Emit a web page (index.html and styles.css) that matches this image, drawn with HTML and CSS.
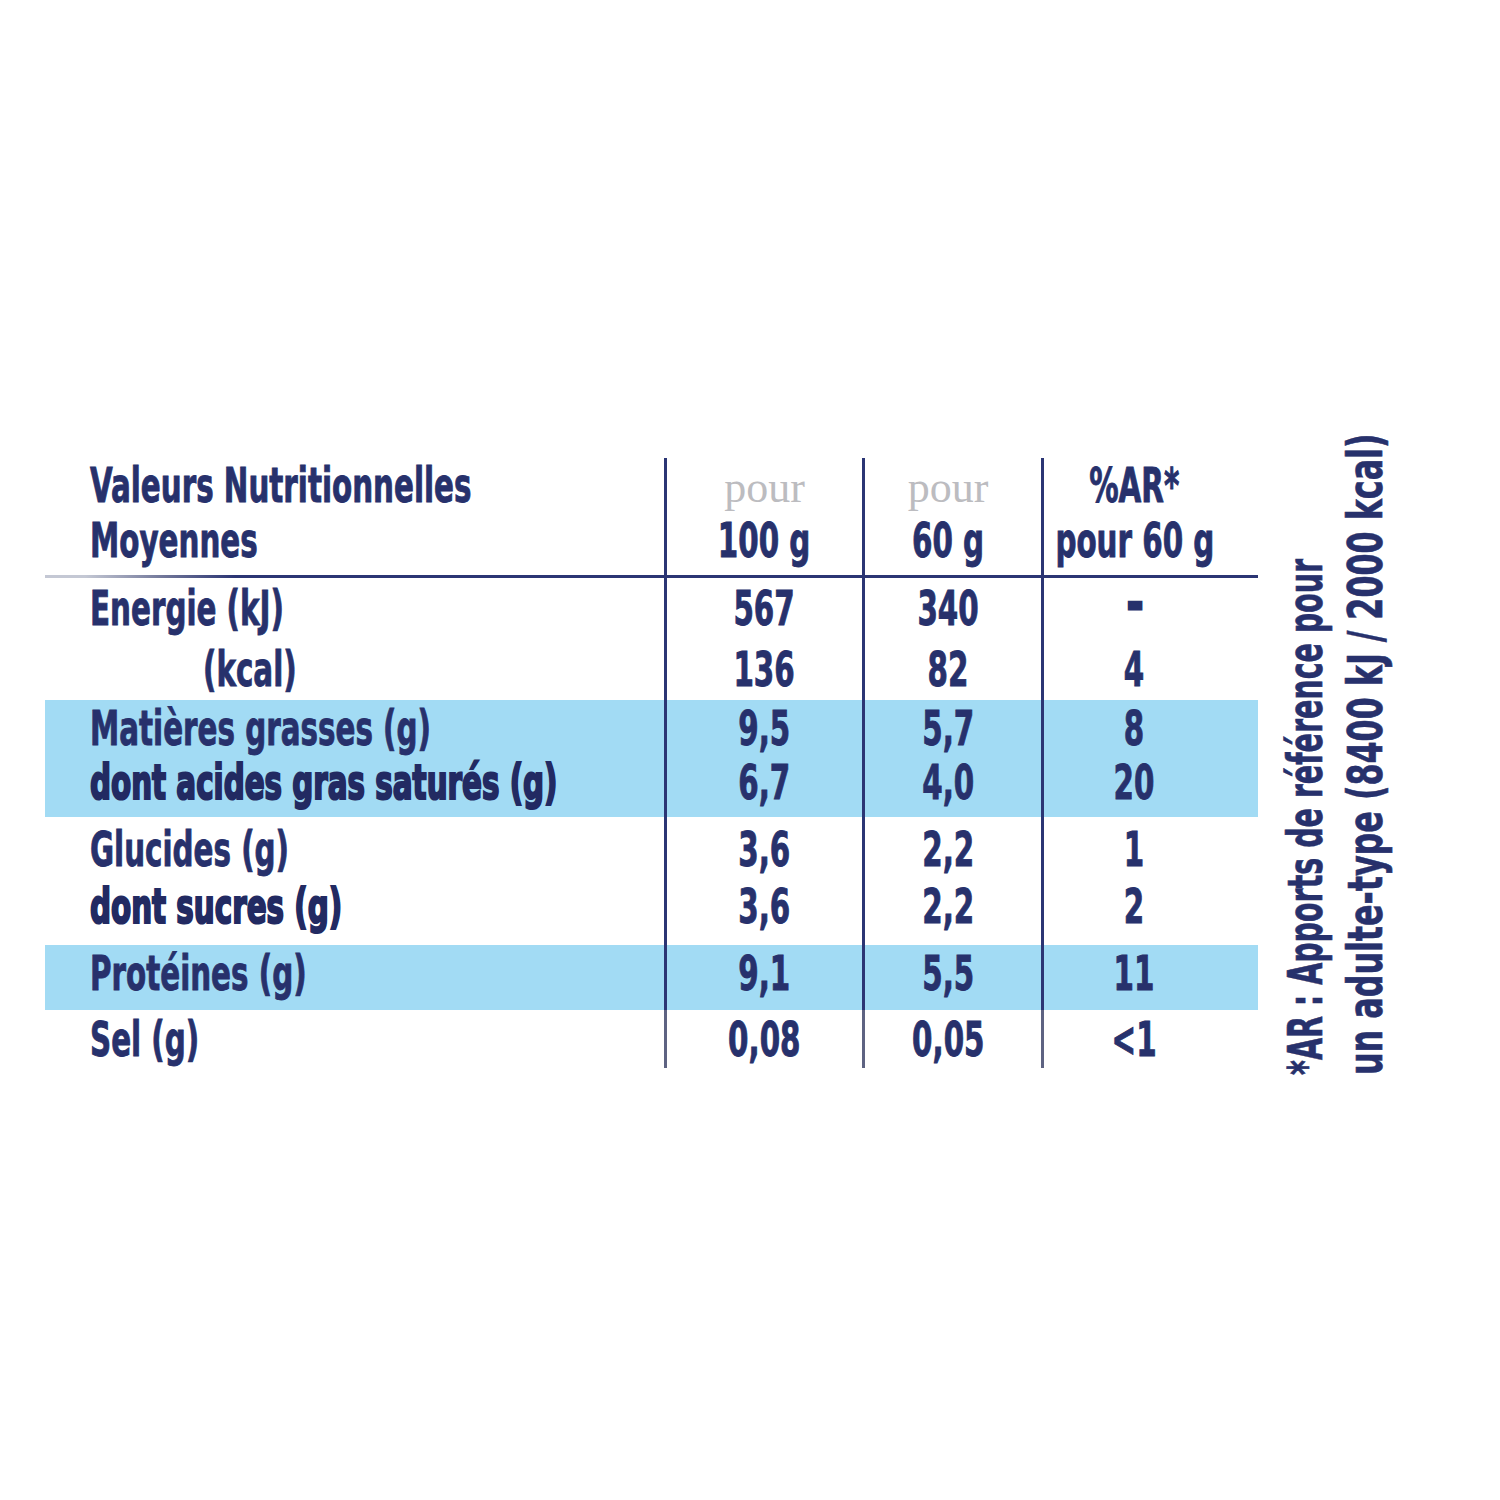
FILE: index.html
```html
<!DOCTYPE html>
<html lang="fr">
<head>
<meta charset="utf-8">
<title>Valeurs Nutritionnelles</title>
<link rel="stylesheet" href="styles.css">
</head>
<body>
<main class="label">
  <section class="table">
    <div class="row head">
      <div class="cell name">
        <div class="hl"><span class="t">Valeurs Nutritionnelles</span></div>
        <div class="hl"><span class="t">Moyennes</span></div>
      </div>
      <div class="cell c1">
        <div class="hl"><span class="pour">pour</span></div>
        <div class="hl"><span class="t">100 g</span></div>
      </div>
      <div class="cell c2">
        <div class="hl"><span class="pour">pour</span></div>
        <div class="hl"><span class="t">60 g</span></div>
      </div>
      <div class="cell c3">
        <div class="hl"><span class="t">%AR*</span></div>
        <div class="hl"><span class="t">pour 60 g</span></div>
      </div>
    </div>

    <div class="row r-kj">
      <div class="cell name"><span class="t">Energie (kJ)</span></div>
      <div class="cell c1"><span class="t">567</span></div>
      <div class="cell c2"><span class="t">340</span></div>
      <div class="cell c3"><span class="t dash">-</span></div>
    </div>
    <div class="row r-kcal">
      <div class="cell name"><span class="t indent">(kcal)</span></div>
      <div class="cell c1"><span class="t">136</span></div>
      <div class="cell c2"><span class="t">82</span></div>
      <div class="cell c3"><span class="t">4</span></div>
    </div>
    <div class="row band r-fat">
      <div class="cell name"><span class="t">Matières grasses (g)</span></div>
      <div class="cell c1"><span class="t">9,5</span></div>
      <div class="cell c2"><span class="t">5,7</span></div>
      <div class="cell c3"><span class="t">8</span></div>
    </div>
    <div class="row band r-sat">
      <div class="cell name"><span class="t heavy">dont acides gras saturés (g)</span></div>
      <div class="cell c1"><span class="t">6,7</span></div>
      <div class="cell c2"><span class="t">4,0</span></div>
      <div class="cell c3"><span class="t">20</span></div>
    </div>
    <div class="row r-carb">
      <div class="cell name"><span class="t">Glucides (g)</span></div>
      <div class="cell c1"><span class="t">3,6</span></div>
      <div class="cell c2"><span class="t">2,2</span></div>
      <div class="cell c3"><span class="t">1</span></div>
    </div>
    <div class="row r-sug">
      <div class="cell name"><span class="t heavy">dont sucres (g)</span></div>
      <div class="cell c1"><span class="t">3,6</span></div>
      <div class="cell c2"><span class="t">2,2</span></div>
      <div class="cell c3"><span class="t">2</span></div>
    </div>
    <div class="row band r-prot">
      <div class="cell name"><span class="t">Protéines (g)</span></div>
      <div class="cell c1"><span class="t">9,1</span></div>
      <div class="cell c2"><span class="t">5,5</span></div>
      <div class="cell c3"><span class="t">11</span></div>
    </div>
    <div class="row r-salt">
      <div class="cell name"><span class="t">Sel (g)</span></div>
      <div class="cell c1"><span class="t">0,08</span></div>
      <div class="cell c2"><span class="t">0,05</span></div>
      <div class="cell c3"><span class="t">&lt;1</span></div>
    </div>
  </section>

  <aside class="note">
    <div class="note-text">
      <p class="nl nl1">*AR : Apports de référence pour</p>
      <p class="nl nl2">un adulte-type (8400 kJ / 2000 kcal)</p>
    </div>
  </aside>
</main>
</body>
</html>
```

FILE: styles.css
```css
html, body {
  margin: 0;
  padding: 0;
  background: #ffffff;
}

body {
  font-family: "DejaVu Sans Condensed", "DejaVu Sans", sans-serif;
  font-weight: 700;
  font-size: 48px;
  color: #27316c;
}

.label {
  display: flex;
  align-items: flex-start;
  padding: 458px 0 0 45px;
}

.table {
  flex: none;
  width: 1213px;
}

.row {
  display: flex;
  box-sizing: border-box;
}

.cell {
  flex: none;
  box-sizing: border-box;
  display: flex;
  flex-direction: column;
  justify-content: center;
  white-space: nowrap;
  line-height: 50px;
}

.name {
  width: 619px;
  padding-left: 45px;
  align-items: flex-start;
}

.c1, .c2, .c3 {
  border-left: 3px solid #2b3574;
  align-items: center;
}

.c1 { width: 198px; }
.c2 { width: 179px; padding-right: 10px; }
.c3 { width: 216px; padding-right: 32px; }

.t {
  display: inline-block;
  transform: scaleX(0.68);
  transform-origin: center center;
  -webkit-text-stroke: 0.9px #27316c;
}

.name .t {
  transform-origin: left center;
}

.indent {
  margin-left: 113px;
}

.heavy {
  -webkit-text-stroke: 2.2px #222a62;
  color: #222a62;
}

.dash {
  -webkit-text-stroke: 3px #27316c;
  transform: scaleX(0.9) translateY(-6px);
}

/* header */
.head {
  height: 120px;
  border-bottom: 3px solid #2b3574;
  border-image: linear-gradient(to right, #c4c8d4 0, #c4c8d4 40px, #6f7598 120px, #2b3574 190px, #2b3574 100%) 1;
  border-image-slice: 0 0 1 0;
  border-image-width: 0 0 3px 0;
}

.head .cell {
  justify-content: flex-start;
  line-height: 55px;
}

.hl {
  height: 55px;
}

.pour {
  font-family: "Liberation Serif", "Times New Roman", serif;
  font-weight: 400;
  font-size: 44px;
  color: #bcbcc0;
}

/* data rows */
.r-kj   { height: 60px; }
.r-kcal { height: 62px; }
.r-fat  { height: 55px; }
.r-sat  { height: 62px; }
.r-carb { height: 63px; }
.r-sug  { height: 65px; }
.r-prot { height: 65px; }
.r-salt { height: 58px; }

.r-sat .cell  { padding-bottom: 8px; }
.r-sug .cell  { padding-bottom: 14px; }
.r-prot .cell { padding-bottom: 10px; }

.band {
  background: #a2dbf4;
}

.r-salt .c1, .r-salt .c2, .r-salt .c3 {
  border-left-color: #5e6382;
}

/* rotated footnote */
.note {
  flex: none;
  width: 120px;
  margin-left: 17px;
  padding-top: 617px;
}

.note-text {
  height: 0;
  writing-mode: vertical-rl;
  white-space: nowrap;
  transform-origin: center top;
  transform: rotate(180deg);
}

.nl {
  margin: 0;
  height: 0;
  line-height: 60px;
  font-size: 48px;
  transform-origin: center top;
  -webkit-text-stroke: 0.6px #27316c;
}

.nl1 { transform: scaleY(0.66); }
.nl2 { transform: scaleY(0.735); }
```
